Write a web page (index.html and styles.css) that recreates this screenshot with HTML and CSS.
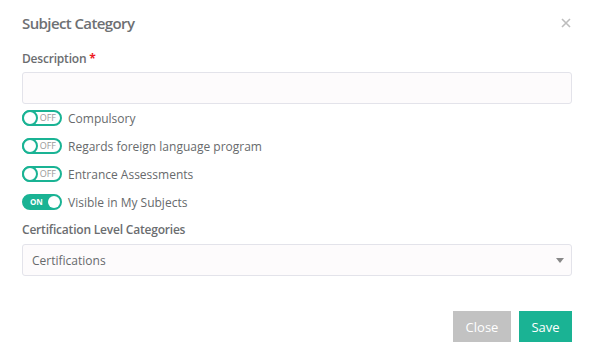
FILE: index.html
```html
<!DOCTYPE html>
<html>
<head>
    <title>Subject Category</title>
    <link rel="stylesheet" href="styles.css">
</head>
<body>
    <div class="modal">
        <div class="modal-header">
            <h4 class="modal-title">Subject Category</h4>
            <button class="close" type="button">
                <svg width="10" height="10" viewBox="0 0 10 10"><path d="M1 1L9 9M9 1L1 9" stroke="#bdbdbd" stroke-width="1.6"/></svg>
            </button>
        </div>
        <div class="modal-body">
            <label class="lab">Description <span class="req">*</span></label>
            <input class="ipt" type="text">

            <div class="switch-row">
                <span class="switch"><span class="knob"></span><span class="txt">OFF</span></span>
                <span class="switch-lab">Compulsory</span>
            </div>
            <div class="switch-row">
                <span class="switch"><span class="knob"></span><span class="txt">OFF</span></span>
                <span class="switch-lab">Regards foreign language program</span>
            </div>
            <div class="switch-row">
                <span class="switch"><span class="knob"></span><span class="txt">OFF</span></span>
                <span class="switch-lab">Entrance Assessments</span>
            </div>
            <div class="switch-row">
                <span class="switch on"><span class="txt">ON</span><span class="knob"></span></span>
                <span class="switch-lab">Visible in My Subjects</span>
            </div>

            <label class="lab lab-cert">Certification Level Categories</label>
            <div class="select">
                <span>Certifications</span>
                <span class="caret"></span>
            </div>
        </div>
        <div class="modal-footer">
            <button class="btn btn-close" type="button">Close</button>
            <button class="btn btn-save" type="button">Save</button>
        </div>
    </div>
</body>
</html>
```

FILE: styles.css
```css
* {
    margin: 0;
    padding: 0;
    box-sizing: border-box;
}

body {
    background-color: #fff;
    font-family: "Open Sans", "Liberation Sans", sans-serif;
    color: #676a6c;
}

.modal {
    width: 594px;
    height: 355px;
    background-color: #fff;
}

.modal-header {
    display: flex;
    align-items: center;
    justify-content: space-between;
    padding: 12px 22px 12px 22px;
    height: 46px;
}

.modal-title {
    font-size: 15px;
    font-weight: 600;
    line-height: 22px;
    letter-spacing: -0.6px;
    color: #6e7073;
}

.close {
    border: none;
    background: none;
    display: flex;
    margin-right: 1px;
}

.modal-body {
    padding: 4px 22px 0 22px;
}

.lab {
    display: block;
    font-size: 12px;
    font-weight: 600;
    line-height: 18px;
    letter-spacing: -0.2px;
    margin-bottom: 4px;
    color: #6b6d70;
}

.req {
    color: #ed1c24;
    font-weight: 700;
}

.ipt {
    display: block;
    width: 100%;
    height: 32px;
    border: 1px solid #e3e3ea;
    border-radius: 3px;
    background-color: #fdfbfc;
    outline: none;
}

.switch-row {
    display: flex;
    align-items: center;
    height: 28px;
}

.switch {
    position: relative;
    display: flex;
    align-items: center;
    justify-content: flex-end;
    width: 40px;
    height: 16px;
    border: 2px solid #1ab394;
    border-radius: 8px;
    background-color: #fff;
    padding-right: 4px;
}

.switch .knob {
    position: absolute;
    left: -2px;
    top: -2px;
    width: 16px;
    height: 16px;
    border: 2px solid #1ab394;
    border-radius: 50%;
    background-color: #fff;
}

.switch .txt {
    font-size: 9px;
    line-height: 12px;
    color: #999;
}

.switch.on {
    background-color: #1ab394;
    justify-content: flex-start;
    padding-left: 6px;
}

.switch.on .knob {
    left: auto;
    right: 0;
    top: 0;
    width: 12px;
    height: 12px;
    border: none;
}

.switch.on .txt {
    font-size: 8px;
    color: #fff;
    font-weight: 700;
}

.switch-lab {
    margin-left: 6px;
    font-size: 12px;
    color: #676a6c;
}

.lab-cert {
    margin-top: 5px;
    margin-bottom: 5px;
}

.select {
    display: flex;
    align-items: center;
    justify-content: space-between;
    height: 32px;
    padding: 0 7px 0 9px;
    border: 1px solid #e3e3ea;
    border-radius: 3px;
    background-color: #fdfbfc;
    font-size: 12px;
    color: #676a6c;
}

.caret {
    width: 0;
    height: 0;
    border-left: 4px solid transparent;
    border-right: 4px solid transparent;
    border-top: 5px solid #888;
}

.modal-footer {
    display: flex;
    justify-content: flex-end;
    gap: 8px;
    padding: 35px 22px 0 22px;
}

.btn {
    height: 31px;
    border: none;
    border-radius: 0;
    color: #fff;
    font-family: "Open Sans", "Liberation Sans", sans-serif;
    font-size: 13px;
}

.btn-close {
    width: 58px;
    background-color: #c2c2c2;
}

.btn-save {
    width: 53px;
    background-color: #1ab394;
}
```
